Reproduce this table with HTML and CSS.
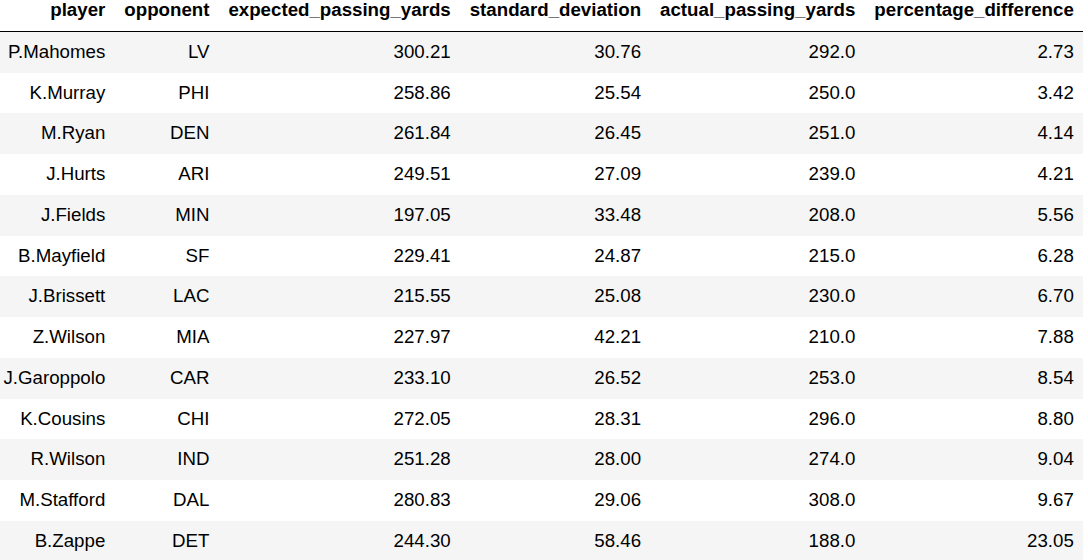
FILE: index.html
```html
<!DOCTYPE html>
<html>
<head>
<meta charset="utf-8">
<link rel="stylesheet" href="styles.css">
</head>
<body>
<table class="df">
  <thead>
    <tr>
      <th>player</th><th>opponent</th><th>expected_passing_yards</th><th>standard_deviation</th><th>actual_passing_yards</th><th>percentage_difference</th>
    </tr>
  </thead>
  <tbody>
    <tr><td>P.Mahomes</td><td>LV</td><td>300.21</td><td>30.76</td><td>292.0</td><td>2.73</td></tr>
    <tr><td>K.Murray</td><td>PHI</td><td>258.86</td><td>25.54</td><td>250.0</td><td>3.42</td></tr>
    <tr><td>M.Ryan</td><td>DEN</td><td>261.84</td><td>26.45</td><td>251.0</td><td>4.14</td></tr>
    <tr><td>J.Hurts</td><td>ARI</td><td>249.51</td><td>27.09</td><td>239.0</td><td>4.21</td></tr>
    <tr><td>J.Fields</td><td>MIN</td><td>197.05</td><td>33.48</td><td>208.0</td><td>5.56</td></tr>
    <tr><td>B.Mayfield</td><td>SF</td><td>229.41</td><td>24.87</td><td>215.0</td><td>6.28</td></tr>
    <tr><td>J.Brissett</td><td>LAC</td><td>215.55</td><td>25.08</td><td>230.0</td><td>6.70</td></tr>
    <tr><td>Z.Wilson</td><td>MIA</td><td>227.97</td><td>42.21</td><td>210.0</td><td>7.88</td></tr>
    <tr><td>J.Garoppolo</td><td>CAR</td><td>233.10</td><td>26.52</td><td>253.0</td><td>8.54</td></tr>
    <tr><td>K.Cousins</td><td>CHI</td><td>272.05</td><td>28.31</td><td>296.0</td><td>8.80</td></tr>
    <tr><td>R.Wilson</td><td>IND</td><td>251.28</td><td>28.00</td><td>274.0</td><td>9.04</td></tr>
    <tr><td>M.Stafford</td><td>DAL</td><td>280.83</td><td>29.06</td><td>308.0</td><td>9.67</td></tr>
    <tr><td>B.Zappe</td><td>DET</td><td>244.30</td><td>58.46</td><td>188.0</td><td>23.05</td></tr>
  </tbody>
</table>
</body>
</html>
```
FILE: styles.css
```css
html, body {
  margin: 0;
  padding: 0;
  background: #fff;
}
body {
  font-family: "Liberation Sans", Arial, sans-serif;
  font-size: 18.7px;
  color: #000;
  overflow: hidden;
}
.df {
  border-collapse: collapse;
  border-spacing: 0;
  margin-left: -6px;
}
.df th,
.df td {
  text-align: right;
  white-space: nowrap;
  line-height: 20.75px;
  padding: 10px 9.5px;
  vertical-align: middle;
}
.df th {
  font-weight: bold;
  padding-top: 0;
  padding-bottom: 10px;
}
.df thead {
  border-bottom: 1px solid #000;
}
.df tbody tr:nth-child(odd) {
  background: #f5f5f5;
}
```
